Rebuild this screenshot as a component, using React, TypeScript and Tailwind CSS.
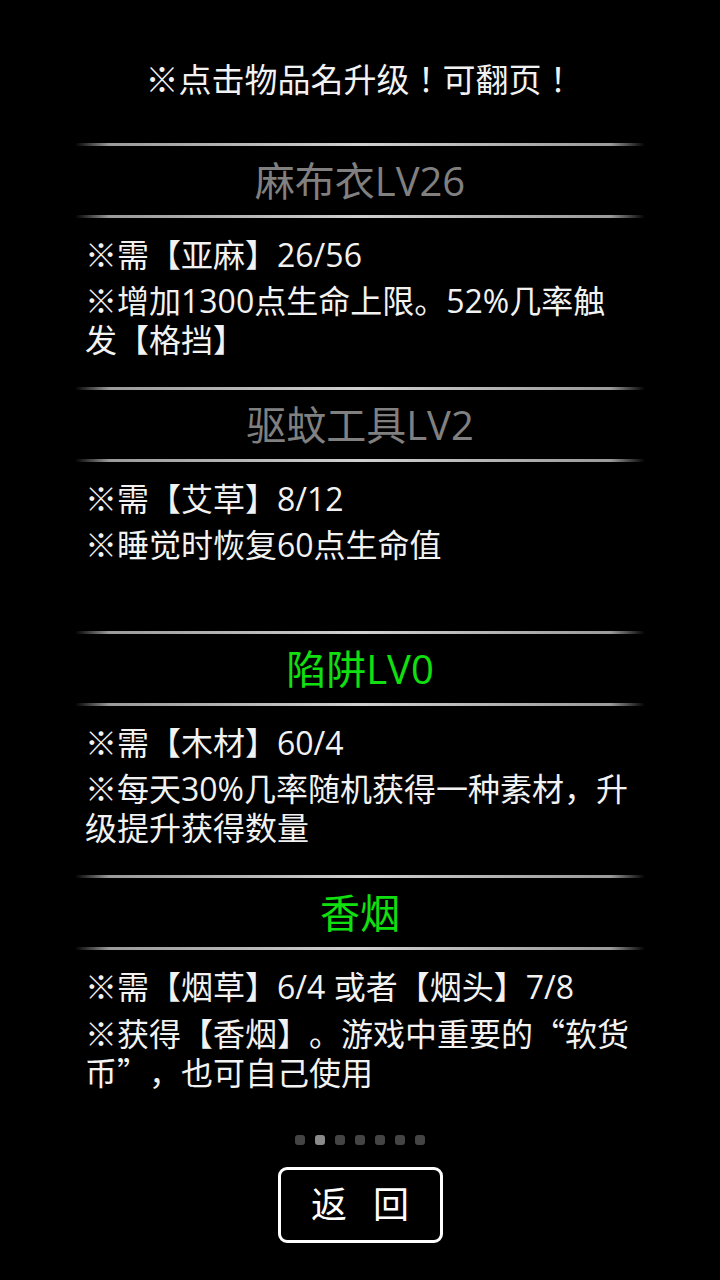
const FONT = { fontFamily: '"Open Sans", "Noto Sans CJK SC", sans-serif' };

type Item = {
  name: string;
  enabled: boolean;
  lines: string[];
};

// line breaks follow the game's TextView wrapping
const items: Item[] = [
  { name: '麻布衣LV26', enabled: false, lines: ['※需【亚麻】26/56', '※增加1300点生命上限。52%几率触\n发【格挡】'] },
  { name: '驱蚊工具LV2', enabled: false, lines: ['※需【艾草】8/12', '※睡觉时恢复60点生命值'] },
  { name: '陷阱LV0', enabled: true, lines: ['※需【木材】60/4', '※每天30%几率随机获得一种素材，升\n级提升获得数量'] },
  { name: '香烟', enabled: true, lines: ['※需【烟草】6/4 或者【烟头】7/8', '※获得【香烟】。游戏中重要的“软货\n币”，也可自己使用'] },
];

// lines without latin/digits use the CJK face so punctuation stays full width
const hasLatin = (s: string) => /[A-Za-z0-9]/.test(s);

function Divider() {
  return (
    <div className="h-[3px] mx-[75px] bg-[linear-gradient(to_right,transparent,#9a9a9a_6%,#d0d0d0_50%,#9a9a9a_94%,transparent)]" />
  );
}

export default function App() {
  return (
    <div className="w-[720px] h-[1280px] bg-black text-[#f2f2f2] flex flex-col [text-spacing-trim:space-all]" style={FONT}>
      <div className="pt-[58px] h-[143px] text-center text-[33px] leading-[40px] font-['Noto_Sans_CJK_JP'] [font-feature-settings:'fwid']">
        ※点击物品名升级！可翻页！
      </div>

      {items.map((item) => (
        <div key={item.name} className="h-[244px] flex flex-col">
          <Divider />
          <div
            className={`h-[69px] flex items-center justify-center text-[40px] ${item.enabled ? 'text-[#10e010]' : 'text-[#808080]'}`}
          >
            {item.name}
          </div>
          <Divider />
          <div className="pl-[85px] pr-[78px] pt-[17px] flex flex-col gap-[7px] text-[32px] leading-[39px]">
            {item.lines.map((l, i) => (
              <p key={i} className={`whitespace-pre-line ${hasLatin(l) ? '' : "font-['Noto_Sans_CJK_SC']"}`}>
                {l}
              </p>
            ))}
          </div>
        </div>
      ))}

      <div className="flex justify-center gap-[10px] mt-[16px]">
        {[0, 1, 2, 3, 4, 5, 6].map((d) => (
          <div key={d} className={`w-[10px] h-[10px] rounded-[3px] ${d === 1 ? 'bg-[#8a8a8a]' : 'bg-[#444]'}`} />
        ))}
      </div>

      <div className="flex justify-center mt-[22px]">
        <button className="w-[165px] h-[76px] border-[3px] border-white rounded-[9px] text-[36px] text-white tracking-[26px] pl-[26px] flex items-center justify-center">
          返回
        </button>
      </div>
    </div>
  );
}
